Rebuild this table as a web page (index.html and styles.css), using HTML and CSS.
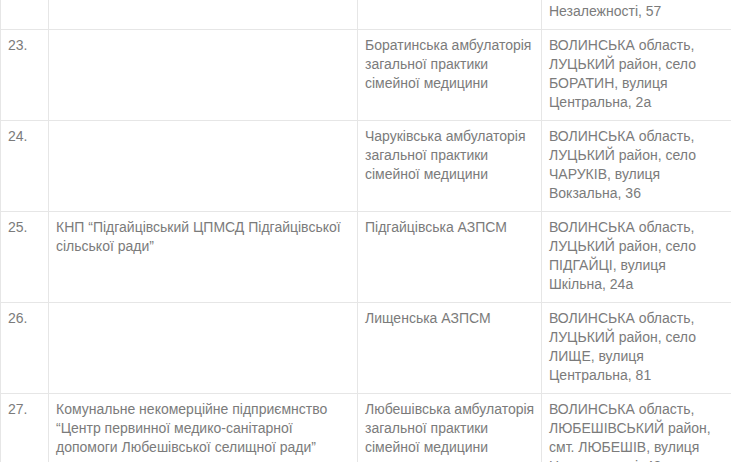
FILE: index.html
```html
<!DOCTYPE html>
<html lang="uk">
<head>
<meta charset="utf-8">
<title>Перелік закладів</title>
<link rel="stylesheet" href="styles.css">
</head>
<body>
<div class="viewport">
<table class="facilities">
  <colgroup>
    <col class="c-num">
    <col class="c-org">
    <col class="c-unit">
    <col class="c-addr">
  </colgroup>
  <tbody>
    <tr class="row-tail">
      <td></td>
      <td></td>
      <td></td>
      <td>Незалежності, 57</td>
    </tr>
    <tr>
      <td>23.</td>
      <td></td>
      <td class="unit">Боратинська амбулаторія<br>загальної практики<br>сімейної медицини</td>
      <td>ВОЛИНСЬКА область, ЛУЦЬКИЙ район, село БОРАТИН, вулиця Центральна, 2а</td>
    </tr>
    <tr>
      <td>24.</td>
      <td></td>
      <td class="unit">Чаруківська амбулаторія<br>загальної практики<br>сімейної медицини</td>
      <td>ВОЛИНСЬКА область, ЛУЦЬКИЙ район, село ЧАРУКІВ, вулиця Вокзальна, 36</td>
    </tr>
    <tr>
      <td>25.</td>
      <td>КНП “Підгайцівський ЦПМСД Підгайцівської сільської ради”</td>
      <td class="unit">Підгайцівська АЗПСМ</td>
      <td>ВОЛИНСЬКА область, ЛУЦЬКИЙ район, село ПІДГАЙЦІ, вулиця Шкільна, 24а</td>
    </tr>
    <tr>
      <td>26.</td>
      <td></td>
      <td class="unit">Лищенська АЗПСМ</td>
      <td>ВОЛИНСЬКА область, ЛУЦЬКИЙ район, село ЛИЩЕ, вулиця Центральна, 81</td>
    </tr>
    <tr>
      <td>27.</td>
      <td>Комунальне некомерційне підприємнство “Центр первинної медико-санітарної допомоги Любешівської селищної ради”</td>
      <td class="unit">Любешівська амбулаторія<br>загальної практики<br>сімейної медицини</td>
      <td>ВОЛИНСЬКА область, ЛЮБЕШІВСЬКИЙ район, смт. ЛЮБЕШІВ, вулиця Незалежності, 48</td>
    </tr>
  </tbody>
</table>
</div>
</body>
</html>
```

FILE: styles.css
```css
html, body {
  margin: 0;
  padding: 0;
  background: #ffffff;
}

.viewport {
  height: 462px;
  overflow: hidden;
}

.facilities {
  border-collapse: collapse;
  table-layout: fixed;
  width: 731px;
  font-family: "Liberation Sans", Arial, sans-serif;
  font-size: 14px;
  line-height: 19px;
  color: #7b7b7b;
}

.c-num { width: 48px; }
.c-org { width: 309px; }
.c-unit { width: 184px; }
.c-addr { width: 190px; }

.facilities td {
  border: 1px solid #e6e6e6;
  padding: 6px 7px 8px;
  vertical-align: top;
}

.facilities td.unit {
  white-space: nowrap;
}

.facilities .row-tail td {
  height: 19px;
  padding-top: 2px;
  border-top: 0;
}
```
